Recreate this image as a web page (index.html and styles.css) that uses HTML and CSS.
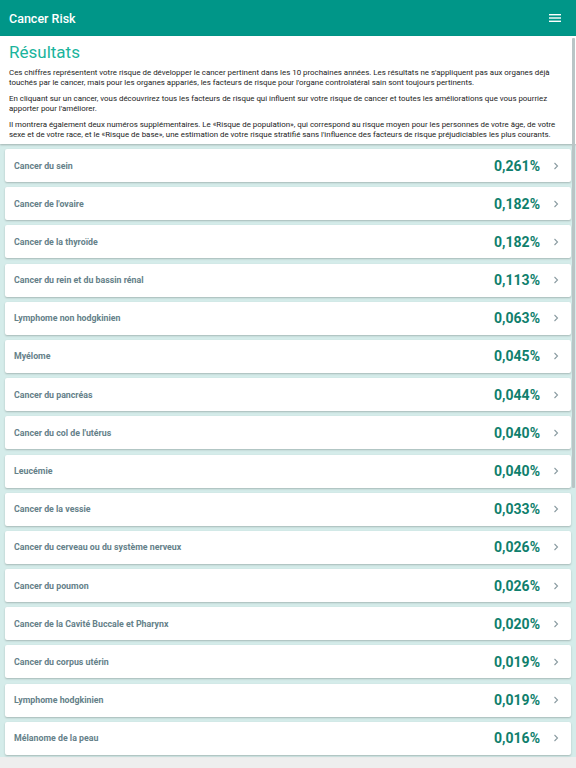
FILE: index.html
```html
<!DOCTYPE html>
<html lang="fr">

<head>
    <meta charset="UTF-8">
    <meta name="viewport" content="width=device-width, initial-scale=1.0">
    <title>Cancer Risk</title>
    <link rel="stylesheet" href="styles.css">
</head>

<body>
    <header class="topbar">
        <h1 class="topbar-title">Cancer Risk</h1>
        <svg class="menu-icon" width="12" height="8" viewBox="0 0 12 8">
            <rect x="0" y="0" width="12" height="1.4" fill="#fff" />
            <rect x="0" y="3.3" width="12" height="1.4" fill="#fff" />
            <rect x="0" y="6.6" width="12" height="1.4" fill="#fff" />
        </svg>
    </header>

    <main class="content">
        <section class="intro">
            <h2 class="intro-title">Résultats</h2>
            <p>Ces chiffres représentent votre risque de développer le cancer pertinent dans les 10 prochaines années. Les résultats ne s'appliquent pas aux organes déjà touchés par le cancer, mais pour les organes appariés, les facteurs de risque pour l'organe controlatéral sain sont toujours pertinents.</p>
            <p>En cliquant sur un cancer, vous découvrirez tous les facteurs de risque qui influent sur votre risque de cancer et toutes les améliorations que vous pourriez apporter pour l'améliorer.</p>
            <p>Il montrera également deux numéros supplémentaires. Le «Risque de population», qui correspond au risque moyen pour les personnes de votre âge, de votre sexe et de votre race, et le «Risque de base», une estimation de votre risque stratifié sans l'influence des facteurs de risque préjudiciables les plus courants.</p>
        </section>

        <ul class="risk-list">
            <li class="risk-card"><span class="risk-name">Cancer du sein</span><span class="risk-value">0,261%</span><svg class="chevron" viewBox="0 0 6 8"><polyline points="1.5,1 4.5,4 1.5,7" /></svg></li>
            <li class="risk-card"><span class="risk-name">Cancer de l'ovaire</span><span class="risk-value">0,182%</span><svg class="chevron" viewBox="0 0 6 8"><polyline points="1.5,1 4.5,4 1.5,7" /></svg></li>
            <li class="risk-card"><span class="risk-name">Cancer de la thyroïde</span><span class="risk-value">0,182%</span><svg class="chevron" viewBox="0 0 6 8"><polyline points="1.5,1 4.5,4 1.5,7" /></svg></li>
            <li class="risk-card"><span class="risk-name">Cancer du rein et du bassin rénal</span><span class="risk-value">0,113%</span><svg class="chevron" viewBox="0 0 6 8"><polyline points="1.5,1 4.5,4 1.5,7" /></svg></li>
            <li class="risk-card"><span class="risk-name">Lymphome non hodgkinien</span><span class="risk-value">0,063%</span><svg class="chevron" viewBox="0 0 6 8"><polyline points="1.5,1 4.5,4 1.5,7" /></svg></li>
            <li class="risk-card"><span class="risk-name">Myélome</span><span class="risk-value">0,045%</span><svg class="chevron" viewBox="0 0 6 8"><polyline points="1.5,1 4.5,4 1.5,7" /></svg></li>
            <li class="risk-card"><span class="risk-name">Cancer du pancréas</span><span class="risk-value">0,044%</span><svg class="chevron" viewBox="0 0 6 8"><polyline points="1.5,1 4.5,4 1.5,7" /></svg></li>
            <li class="risk-card"><span class="risk-name">Cancer du col de l'utérus</span><span class="risk-value">0,040%</span><svg class="chevron" viewBox="0 0 6 8"><polyline points="1.5,1 4.5,4 1.5,7" /></svg></li>
            <li class="risk-card"><span class="risk-name">Leucémie</span><span class="risk-value">0,040%</span><svg class="chevron" viewBox="0 0 6 8"><polyline points="1.5,1 4.5,4 1.5,7" /></svg></li>
            <li class="risk-card"><span class="risk-name">Cancer de la vessie</span><span class="risk-value">0,033%</span><svg class="chevron" viewBox="0 0 6 8"><polyline points="1.5,1 4.5,4 1.5,7" /></svg></li>
            <li class="risk-card"><span class="risk-name">Cancer du cerveau ou du système nerveux</span><span class="risk-value">0,026%</span><svg class="chevron" viewBox="0 0 6 8"><polyline points="1.5,1 4.5,4 1.5,7" /></svg></li>
            <li class="risk-card"><span class="risk-name">Cancer du poumon</span><span class="risk-value">0,026%</span><svg class="chevron" viewBox="0 0 6 8"><polyline points="1.5,1 4.5,4 1.5,7" /></svg></li>
            <li class="risk-card"><span class="risk-name">Cancer de la Cavité Buccale et Pharynx</span><span class="risk-value">0,020%</span><svg class="chevron" viewBox="0 0 6 8"><polyline points="1.5,1 4.5,4 1.5,7" /></svg></li>
            <li class="risk-card"><span class="risk-name">Cancer du corpus utérin</span><span class="risk-value">0,019%</span><svg class="chevron" viewBox="0 0 6 8"><polyline points="1.5,1 4.5,4 1.5,7" /></svg></li>
            <li class="risk-card"><span class="risk-name">Lymphome hodgkinien</span><span class="risk-value">0,019%</span><svg class="chevron" viewBox="0 0 6 8"><polyline points="1.5,1 4.5,4 1.5,7" /></svg></li>
            <li class="risk-card"><span class="risk-name">Mélanome de la peau</span><span class="risk-value">0,016%</span><svg class="chevron" viewBox="0 0 6 8"><polyline points="1.5,1 4.5,4 1.5,7" /></svg></li>
        </ul>

        <div class="scroll-thumb"></div>
    </main>
</body>

</html>
```

FILE: styles.css
```css
* {
    box-sizing: border-box;
    padding: 0;
    margin: 0;
}

body {
    background-color: #eeeeee;
    font-family: Roboto, "Liberation Sans", sans-serif;
    width: 576px;
    height: 768px;
    overflow: hidden;
}

/* 顶栏 */

.topbar {
    height: 36px;
    background: #009688;
    display: flex;
    align-items: center;
    justify-content: space-between;
    padding: 0 15px 0 9px;
}

.topbar-title {
    color: #fff;
    font-size: 12.5px;
    font-weight: 500;
}

.menu-icon {
    display: block;
}

.content {
    position: relative;
}

/* 说明 */

.intro {
    background: #fff;
    padding: 7px 14px 5px 9px;
    box-shadow: 0 1px 2px rgba(0, 0, 0, 0.25);
    position: relative;
}

.intro-title {
    color: #1ab49c;
    font-size: 17px;
    font-weight: 400;
    line-height: 18px;
    margin-bottom: 7px;
}

.intro p {
    font-size: 7.9px;
    line-height: 9.5px;
    color: #222;
    margin-bottom: 7px;
}

.intro p:last-child {
    margin-bottom: 0;
}

/* 列表 */

.risk-list {
    list-style: none;
    background: #d5ecea;
    padding: 5px 4px 2px 5px;
    display: flex;
    flex-direction: column;
    gap: 5.2px;
}

.risk-card {
    height: 33px;
    background: #fff;
    border-radius: 2px;
    box-shadow: 0 1px 2px rgba(0, 0, 0, 0.22);
    display: flex;
    align-items: center;
    padding: 0 12px 0 9px;
    margin-right: 1px;
}

.risk-name {
    flex: 1;
    font-size: 8.8px;
    font-weight: 700;
    color: #658189;
}

.risk-value {
    font-size: 14px;
    font-weight: 700;
    color: #0f7f6d;
    margin-right: 13px;
}

.chevron {
    width: 6px;
    height: 8px;
    fill: none;
    stroke: #8a9ba1;
    stroke-width: 1.1;
}

.scroll-thumb {
    position: absolute;
    top: 2px;
    right: 1px;
    width: 3px;
    height: 450px;
    background: #b9c5c6;
    border-radius: 1px;
}
```
